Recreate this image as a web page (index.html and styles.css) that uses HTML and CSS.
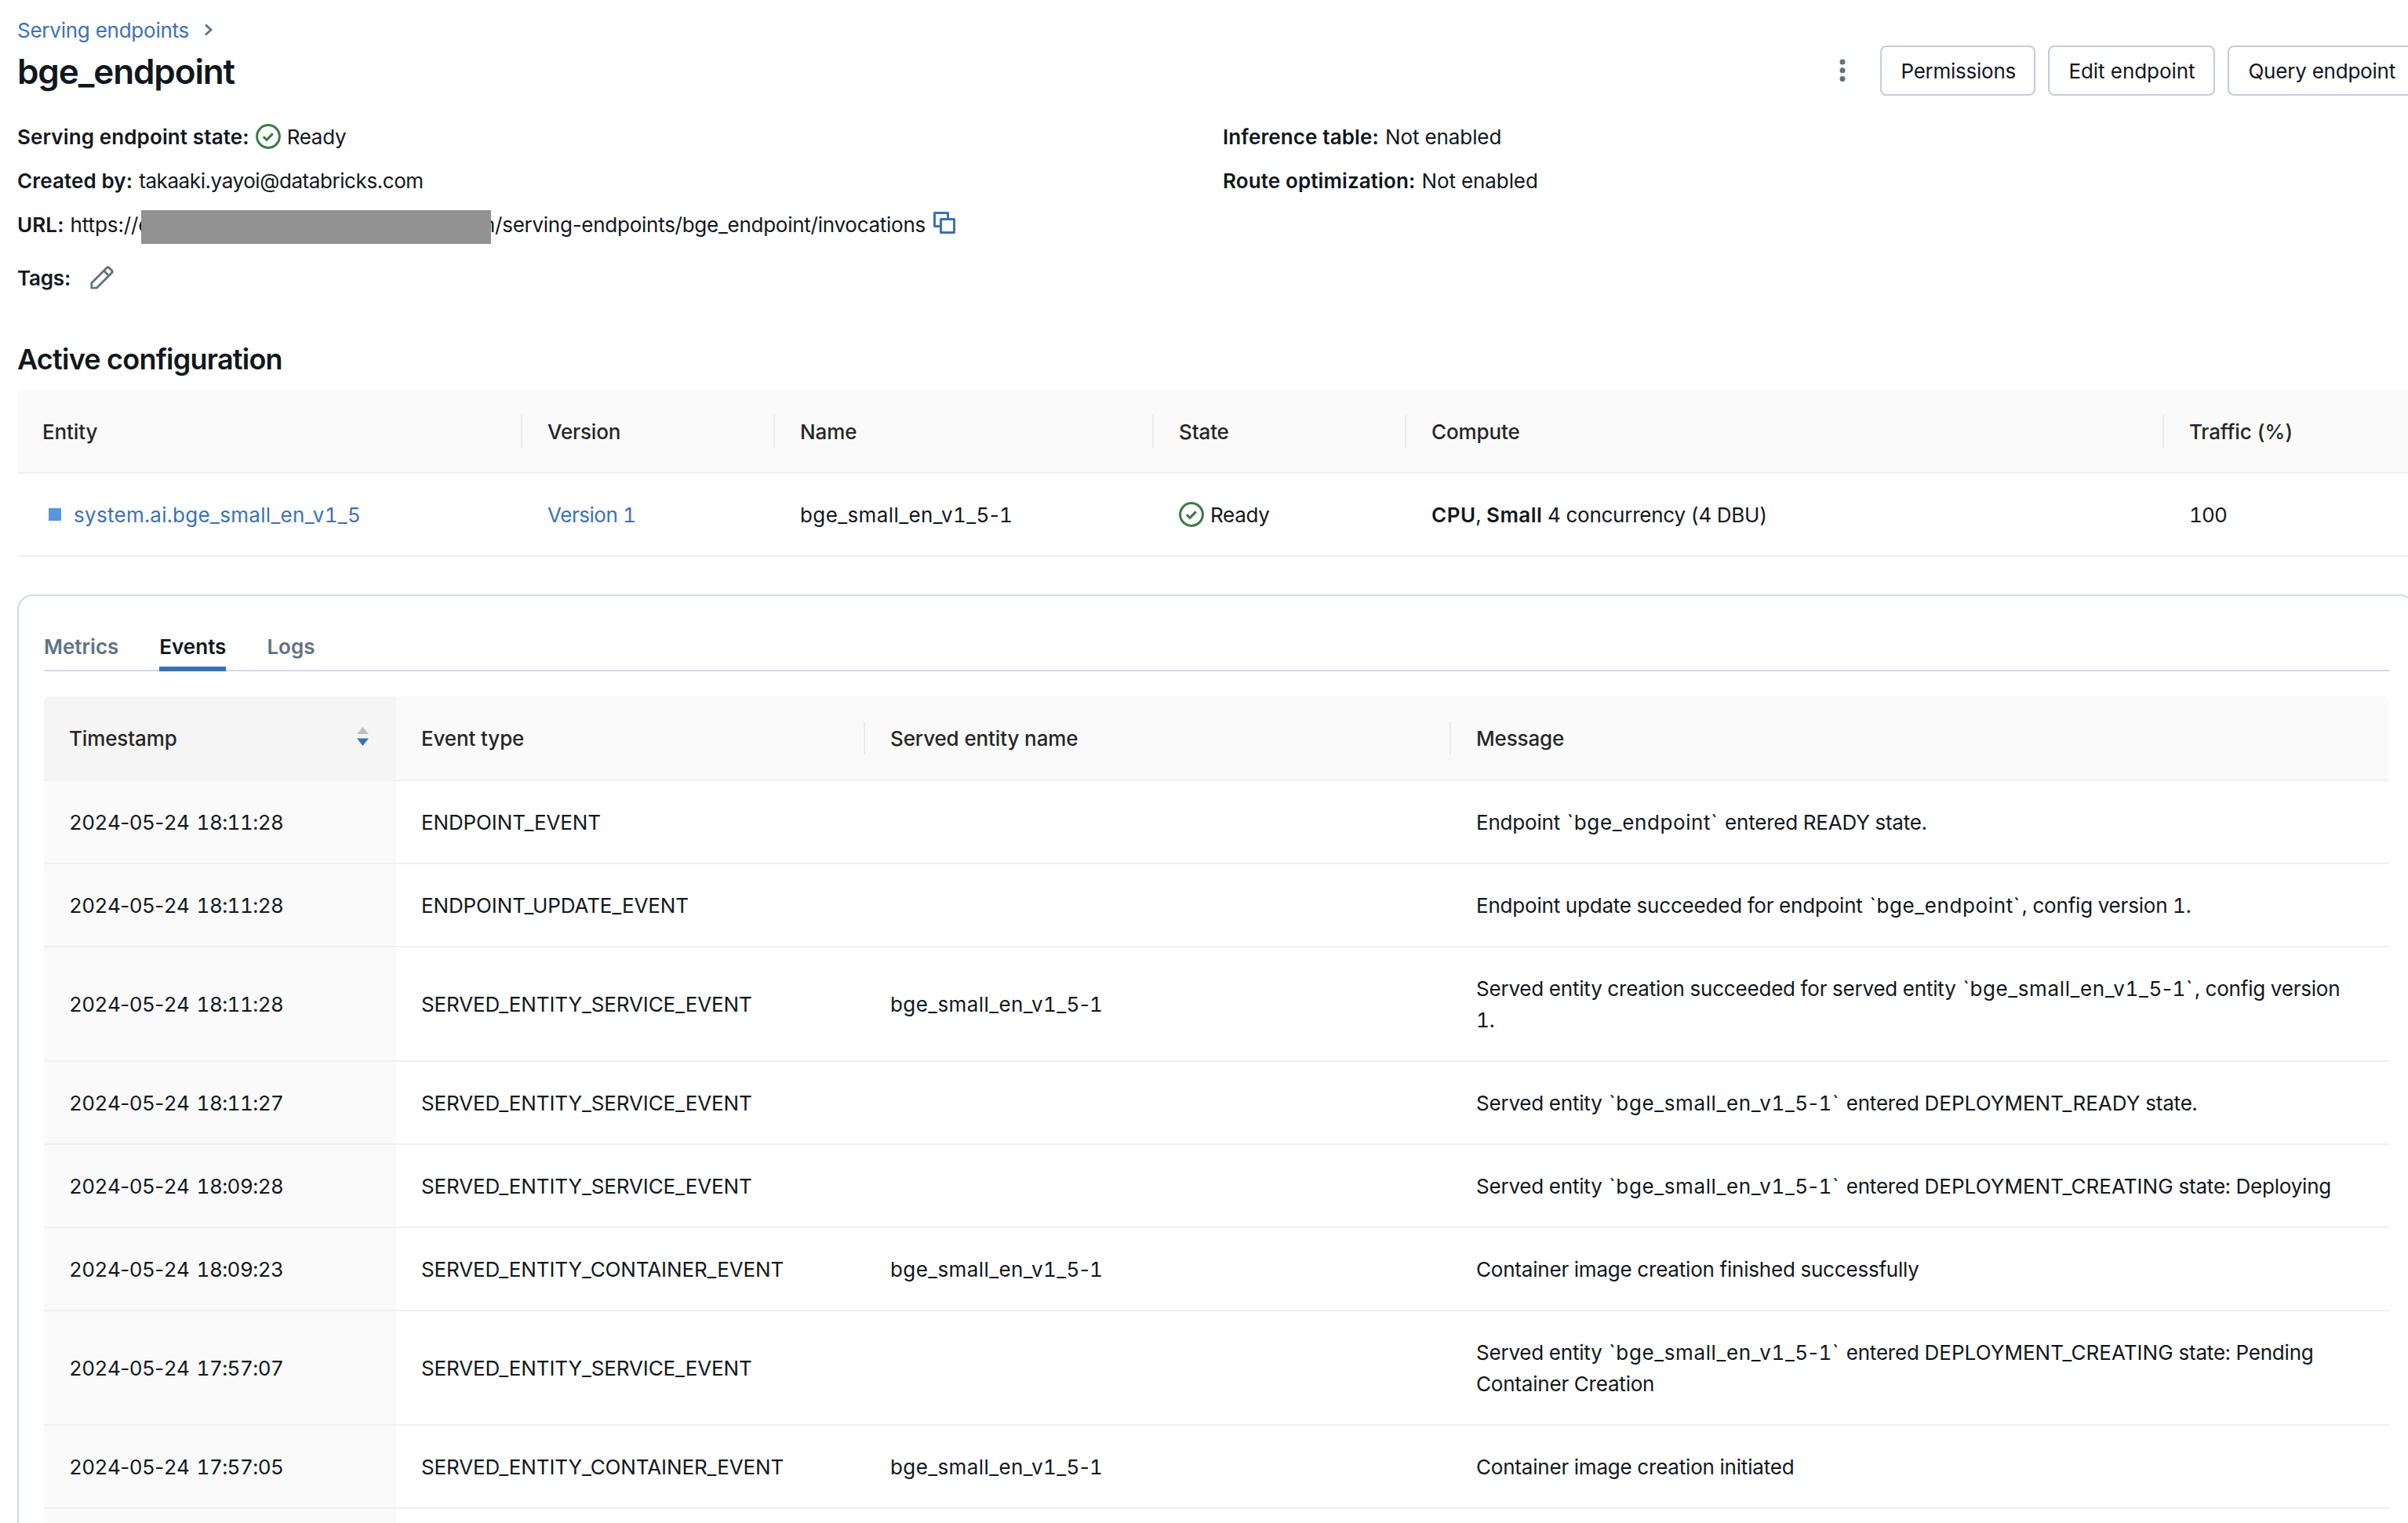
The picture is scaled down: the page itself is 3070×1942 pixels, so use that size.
FILE: index.html
```html
<!DOCTYPE html>
<html lang="en">
<head>
    <meta charset="utf-8">
    <title>bge_endpoint</title>
    <link rel="stylesheet" href="styles.css">
</head>
<body>
    <svg class="icon-defs" width="0" height="0">
        <symbol id="icon-check" viewBox="0 0 32 32">
            <circle cx="16" cy="16" r="14.4" fill="none" stroke="currentColor" stroke-width="3"/>
            <path d="M9.8 16.2l4.2 4.2 7.8-8" fill="none" stroke="currentColor" stroke-width="3"/>
        </symbol>
    </svg>

    <div class="container">
        <nav class="breadcrumb">
            <a href="#">Serving endpoints</a>
            <svg class="chevron" viewBox="0 0 12 16"><path d="M2 1.4l7 6.6-7 6.6" fill="none" stroke="currentColor" stroke-width="2.8"/></svg>
        </nav>

        <header class="page-header">
            <h1>bge_endpoint</h1>
            <div class="actions">
                <button class="more" aria-label="More">
                    <svg viewBox="0 0 8 30"><circle cx="4" cy="4" r="3.5"/><circle cx="4" cy="14.8" r="3.5"/><circle cx="4" cy="25.6" r="3.5"/></svg>
                </button>
                <button class="btn permissions">Permissions</button>
                <button class="btn edit">Edit endpoint</button>
                <button class="btn">Query endpoint</button>
            </div>
        </header>

        <div class="details">
            <div class="details-col">
                <div class="detail state">
                    <strong>Serving endpoint state:</strong>
                    <svg class="check"><use href="#icon-check"/></svg>
                    <span>Ready</span>
                </div>
                <div class="detail"><strong>Created by:</strong><span class="email">takaaki.yayoi@databricks.com</span></div>
                <div class="detail url">
                    <strong>URL:</strong>
                    <span class="url-start">https://e</span>
                    <span class="redacted"></span>
                    <span class="url-end">m/serving-endpoints/bge_endpoint/invocations</span>
                    <svg class="copy" viewBox="0 0 28 28" fill="none" stroke="currentColor" stroke-width="3" stroke-linejoin="round">
                        <path d="M8.5 18.5h-7v-17h17v7"/>
                        <path d="M9.5 9.5h17v17h-17z"/>
                    </svg>
                </div>
                <div class="detail tags">
                    <strong>Tags:</strong>
                    <svg class="pencil" viewBox="0 0 30 30" fill="none" stroke="currentColor" stroke-width="2.8" stroke-linejoin="round">
                        <path d="M1.8 28.2v-6.4L21.2 2.4q1.4-1.2 2.8 0l3.6 3.6q1.2 1.4 0 2.8L8.2 28.2z"/>
                        <path d="M17.4 6.2l6.4 6.4"/>
                    </svg>
                </div>
            </div>
            <div class="details-col">
                <div class="detail"><strong>Inference table:</strong><span class="plain">Not enabled</span></div>
                <div class="detail"><strong>Route optimization:</strong><span class="plain">Not enabled</span></div>
            </div>
        </div>

        <h2>Active configuration</h2>
        <table class="config-table">
            <colgroup>
                <col class="w-4"><col class="w-2"><col class="w-3"><col class="w-2"><col class="w-6"><col class="w-2">
            </colgroup>
            <thead>
                <tr><th>Entity</th><th>Version</th><th>Name</th><th>State</th><th>Compute</th><th>Traffic (%)</th></tr>
            </thead>
            <tbody>
                <tr>
                    <td><div class="entity"><span class="swatch"></span><a class="name" href="#">system.ai.bge_small_en_v1_5</a></div></td>
                    <td><a class="version" href="#">Version 1</a></td>
                    <td class="name">bge_small_en_v1_5<span class="dash">-</span>1</td>
                    <td><div class="ready"><svg class="check"><use href="#icon-check"/></svg>Ready</div></td>
                    <td class="compute"><b>CPU</b>, <b>Small</b> 4 concurrency (4 DBU)</td>
                    <td class="traffic">100</td>
                </tr>
            </tbody>
        </table>

        <div class="panel">
            <div class="tabs">
                <div class="tab">Metrics</div>
                <div class="tab active">Events</div>
                <div class="tab">Logs</div>
            </div>
            <table class="events-table">
                <colgroup>
                    <col class="e-3"><col class="e-4"><col class="e-5"><col class="e-8">
                </colgroup>
                <thead>
                    <tr>
                        <th class="sorted">
                            <div class="sorter">
                                <span>Timestamp</span>
                                <svg viewBox="0 0 15 24"><path d="M0 9l7.5-9L15 9z" fill="#bfbfbf"/><path d="M0 14.5l7.5 9.5 7.5-9.5z" fill="#3970b5"/></svg>
                            </div>
                        </th>
                        <th>Event type</th>
                        <th>Served entity name</th>
                        <th>Message</th>
                    </tr>
                </thead>
                <tbody>
                    <tr>
                        <td class="time">2024<span class="dash">-</span>05<span class="dash">-</span>24 18:11:28</td>
                        <td class="type">ENDPOINT_EVENT</td>
                        <td></td>
                        <td class="message">Endpoint <span class="code">`bge_endpoint`</span> entered READY state.</td>
                    </tr>
                    <tr>
                        <td class="time">2024<span class="dash">-</span>05<span class="dash">-</span>24 18:11:28</td>
                        <td class="type">ENDPOINT_UPDATE_EVENT</td>
                        <td></td>
                        <td class="message">Endpoint update succeeded for endpoint <span class="code">`bge_endpoint`</span>, config version 1.</td>
                    </tr>
                    <tr>
                        <td class="time">2024<span class="dash">-</span>05<span class="dash">-</span>24 18:11:28</td>
                        <td class="type">SERVED_ENTITY_SERVICE_EVENT</td>
                        <td class="name">bge_small_en_v1_5<span class="dash">-</span>1</td>
                        <td class="message">Served entity creation succeeded for served entity <span class="code">`bge_small_en_v1_5<span class="dash">-</span>1`</span>, config version 1.</td>
                    </tr>
                    <tr>
                        <td class="time">2024<span class="dash">-</span>05<span class="dash">-</span>24 18:11:27</td>
                        <td class="type">SERVED_ENTITY_SERVICE_EVENT</td>
                        <td></td>
                        <td class="message">Served entity <span class="code">`bge_small_en_v1_5<span class="dash">-</span>1`</span> entered <span class="status">DEPLOYMENT_READY</span> state.</td>
                    </tr>
                    <tr>
                        <td class="time">2024<span class="dash">-</span>05<span class="dash">-</span>24 18:09:28</td>
                        <td class="type">SERVED_ENTITY_SERVICE_EVENT</td>
                        <td></td>
                        <td class="message">Served entity <span class="code">`bge_small_en_v1_5<span class="dash">-</span>1`</span> entered <span class="status">DEPLOYMENT_CREATING</span> state: Deploying</td>
                    </tr>
                    <tr>
                        <td class="time">2024<span class="dash">-</span>05<span class="dash">-</span>24 18:09:23</td>
                        <td class="type">SERVED_ENTITY_CONTAINER_EVENT</td>
                        <td class="name">bge_small_en_v1_5<span class="dash">-</span>1</td>
                        <td class="message">Container image creation finished successfully</td>
                    </tr>
                    <tr>
                        <td class="time">2024<span class="dash">-</span>05<span class="dash">-</span>24 17:57:07</td>
                        <td class="type">SERVED_ENTITY_SERVICE_EVENT</td>
                        <td></td>
                        <td class="message">Served entity <span class="code">`bge_small_en_v1_5<span class="dash">-</span>1`</span> entered <span class="status">DEPLOYMENT_CREATING</span> state: Pending Container Creation</td>
                    </tr>
                    <tr>
                        <td class="time">2024<span class="dash">-</span>05<span class="dash">-</span>24 17:57:05</td>
                        <td class="type">SERVED_ENTITY_CONTAINER_EVENT</td>
                        <td class="name">bge_small_en_v1_5<span class="dash">-</span>1</td>
                        <td class="message">Container image creation initiated</td>
                    </tr>
                    <tr>
                        <td class="time"></td>
                        <td></td>
                        <td></td>
                        <td></td>
                    </tr>
                </tbody>
            </table>
        </div>
    </div>
</body>
</html>
```
FILE: styles.css
```css
* {
    box-sizing: border-box;
}
html {
    height: 100%;
    overflow: hidden;
}
body {
    margin: 0;
    height: 100%;
    overflow: hidden;
    background-color: #fff;
    color: #11171c;
    font-family: Inter, "Liberation Sans", sans-serif;
    font-size: 26px;
    line-height: 40px;
}
.icon-defs {
    display: block;
}
.container {
    width: 3058px;
    margin-left: 22px;
    padding-top: 18px;
}
a {
    color: #3d71b5;
    text-decoration: none;
    letter-spacing: -0.24px;
}
strong, b {
    font-weight: 600;
}

/* header */
.breadcrumb {
    display: flex;
    align-items: center;
    gap: 19px;
    height: 40px;
    padding-top: 2px;
}
.chevron {
    width: 12px;
    height: 16px;
    margin-top: -2px;
    color: #5f7281;
}
.page-header {
    display: flex;
    justify-content: space-between;
    height: 64px;
}
h1 {
    margin: 0;
    padding-top: 1px;
    font-size: 44px;
    font-weight: 600;
    line-height: 64px;
    letter-spacing: -1.1px;
}
.actions {
    display: flex;
    gap: 16px;
}
button {
    font: inherit;
    color: inherit;
    background: none;
    border: none;
    white-space: nowrap;
}
.more {
    width: 64px;
    padding: 0;
    display: flex;
    align-items: center;
    justify-content: center;
}
.more svg {
    width: 8px;
    height: 30px;
    fill: #5f7281;
}
.btn {
    height: 64px;
    padding: 2px 24px 0;
    border: 2px solid #c3cddb;
    border-radius: 8px;
    letter-spacing: -0.22px;
}
.btn.permissions {
    width: 198px;
    letter-spacing: -0.25px;
}
.btn.edit {
    width: 213px;
    letter-spacing: -0.05px;
}

/* endpoint details */
.details {
    display: grid;
    grid-template-columns: 1537px 1fr;
    margin-top: 32px;
    height: 280px;
}
.details-col {
    display: flex;
    flex-direction: column;
    gap: 16px;
}
.detail {
    display: flex;
    align-items: center;
    gap: 8px;
    height: 40px;
    padding-top: 2px;
    white-space: nowrap;
}
.detail strong {
    letter-spacing: 0.12px;
}
.detail .plain {
    letter-spacing: -0.1px;
}
.state {
    letter-spacing: -0.3px;
}
.email {
    letter-spacing: -0.42px;
}
.check {
    width: 32px;
    height: 32px;
    margin-top: -2px;
    color: #3b7a45;
    flex: none;
}
.url {
    height: 52px;
    align-items: flex-start;
    gap: 0;
    padding-top: 1px;
}
.url strong {
    width: 67.5px;
}
.url-start {
    width: 90.5px;
    letter-spacing: -0.1px;
}
/* covers the workspace host name */
.redacted {
    position: relative;
    width: 446px;
    height: 43px;
    margin-top: 1px;
    background-color: #929292;
}
.url-end {
    width: 554px;
    display: flex;
    justify-content: flex-end;
    letter-spacing: -0.26px;
}
.copy {
    width: 28px;
    height: 28px;
    margin: 3px 0 0 10px;
    color: #3d71b5;
}
.tags {
    gap: 25px;
}
.tags strong {
    letter-spacing: -0.2px;
}
.pencil {
    width: 30px;
    height: 30px;
    margin-top: -2px;
    color: #5f7281;
}

h2 {
    margin: 0 0 16px;
    font-size: 36px;
    font-weight: 600;
    line-height: 48px;
    letter-spacing: -0.78px;
}

/* tables */
table {
    width: 100%;
    table-layout: fixed;
    border-collapse: separate;
    border-spacing: 0;
    font-variant-numeric: tabular-nums;
}
th, td {
    padding: 33px 32px 31px;
    border-bottom: 2px solid #f0f0f0;
}
th {
    position: relative;
    font-weight: 500;
    text-align: left;
    color: #262626;
    background-color: #fafafa;
    letter-spacing: -0.13px;
}
th:not(:last-child):not(.sorted)::before {
    content: "";
    position: absolute;
    top: 50%;
    right: 0;
    width: 2px;
    height: 42px;
    background-color: #ebebeb;
    transform: translateY(-50%);
}
th:first-child {
    border-top-left-radius: 8px;
}
th:last-child {
    border-top-right-radius: 8px;
}
.name {
    letter-spacing: 0.4px;
}
/* tabular figures widen the hyphen too */
.dash {
    font-variant-numeric: normal;
}
.w-2 { width: 322px; }
.w-3 { width: 483px; }
.w-4 { width: 644px; }
.w-6 { width: 966px; }
.entity {
    display: flex;
    align-items: center;
    padding-left: 8px;
}
.entity .name {
    letter-spacing: 0.3px;
}
.swatch {
    width: 16px;
    height: 16px;
    margin: -2px 16px 0 0;
    background-color: #5a96de;
}
.version {
    letter-spacing: -0.45px;
}
.ready {
    display: flex;
    align-items: center;
    gap: 8px;
    letter-spacing: -0.3px;
}
.compute {
    letter-spacing: -0.25px;
}
.compute b {
    letter-spacing: 0.5px;
}
.traffic {
    letter-spacing: -0.9px;
}

/* events panel */
.panel {
    margin-top: 48px;
    height: 1240px;
    padding: 32px;
    border: 2px solid #d1d9e5;
    border-radius: 20px;
}
.tabs {
    display: flex;
    gap: 52px;
    height: 64px;
    border-bottom: 2px solid #d1d9e5;
}
.tab {
    height: 64px;
    padding-top: 13px;
    font-weight: 600;
    color: #5f7281;
}
.tab.active {
    color: #11171c;
    border-bottom: 6px solid #3970b5;
}
.events-table {
    margin-top: 32px;
}
.events-table th {
    height: 108px;
    padding-top: 2px;
    padding-bottom: 0;
}
.e-3 { width: 449px; }
.e-4 { width: 598px; }
.e-5 { width: 747px; }
.e-8 { width: 1196px; }
.events-table th.sorted {
    background-color: #f5f5f5;
}
.sorter {
    display: flex;
    align-items: center;
    justify-content: space-between;
    padding-right: 3px;
}
.sorter svg {
    width: 15px;
    height: 24px;
    margin-bottom: 7px;
}
.time {
    height: 106px;
    background-color: #fafafa;
    letter-spacing: -0.55px;
    word-spacing: 2.8px;
}
.type {
    letter-spacing: -0.12px;
}
.message {
    padding-right: 42px;
    letter-spacing: -0.2px;
}
.code {
    padding: 0 2px;
    letter-spacing: 0.62px;
}
.status {
    letter-spacing: 0.05px;
}
```
